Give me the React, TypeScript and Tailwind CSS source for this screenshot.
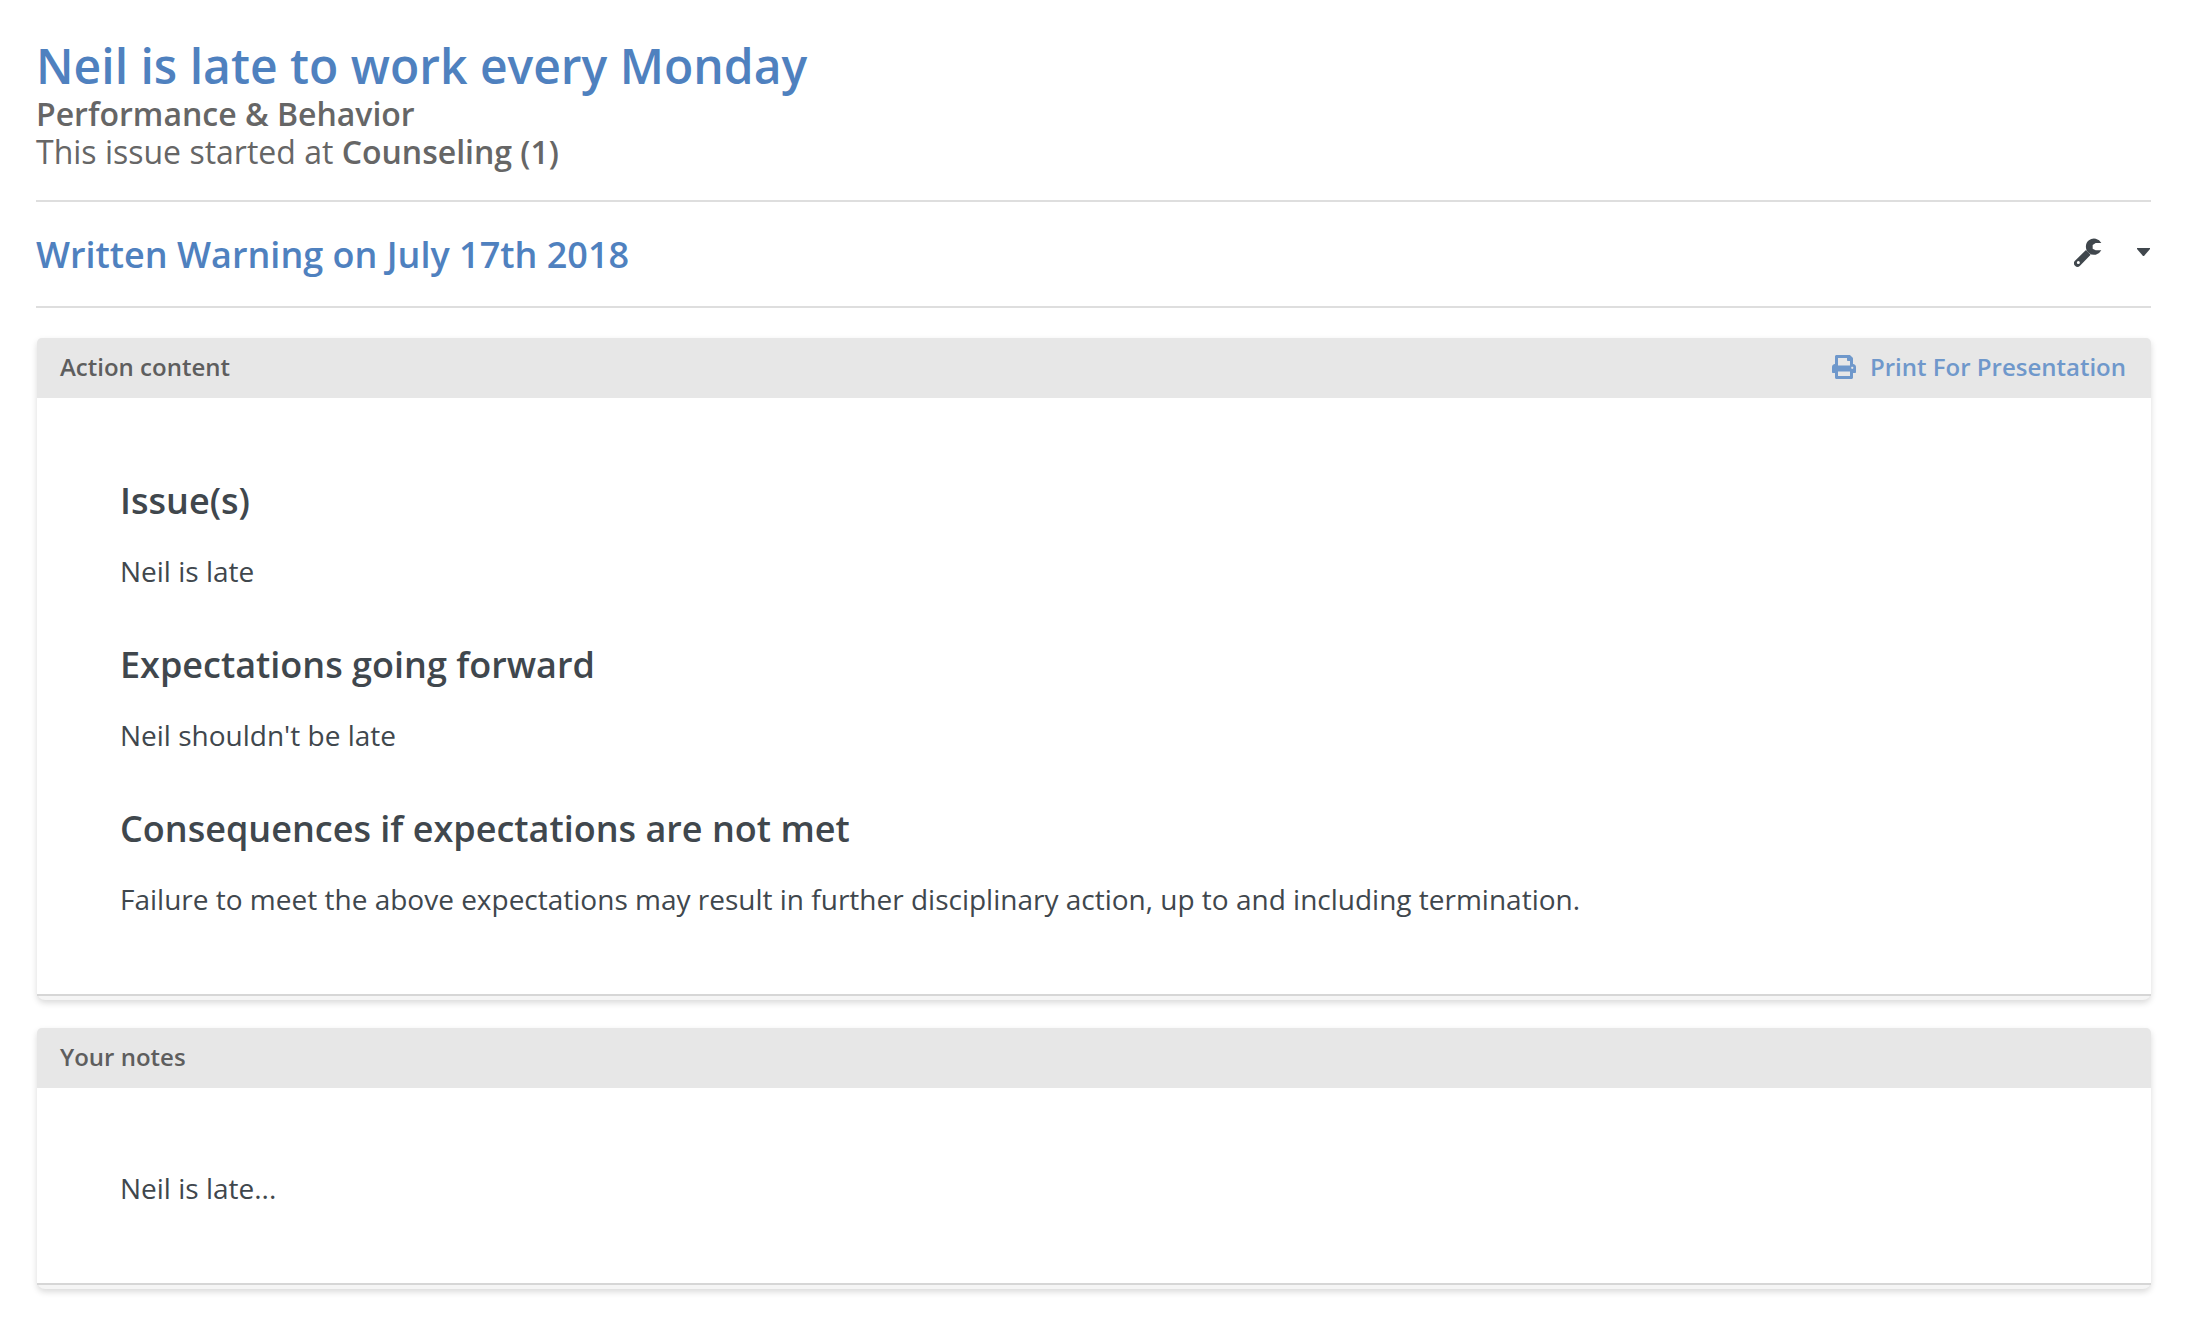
import type { ReactNode } from "react";
import { FaPrint } from "react-icons/fa";

function WrenchIcon() {
  return (
    <svg className="h-[29px] w-7" viewBox="0 0 84 87" fill="currentColor" aria-hidden="true">
      <path d="M82 15A24.5 24.5 0 1 0 82 37H65L56 32V21L65 15Z" />
      <path
        fillRule="evenodd"
        d="M36 36L50 50L18 83A10.500 10.500 0 0 1 3 68ZM13 69a4.500 4.500 0 1 0 0 9a4.500 4.500 0 1 0 0-9Z"
      />
    </svg>
  );
}

function CaretIcon() {
  return (
    <svg className="h-2 w-[13px]" viewBox="0 0 13 8" fill="currentColor" aria-hidden="true">
      <path d="M0 0H13V1L7 8H6L0 1Z" />
    </svg>
  );
}

function Panel({ title, action, children }: { title: string; action?: ReactNode; children: ReactNode }) {
  return (
    <section className="rounded-t-[5px] rounded-b-lg bg-[#f5f5f5] pb-1 shadow-[0_3px_6px_rgba(0,0,0,0.15)]">
      <header className="flex h-[60px] items-center justify-between rounded-t-[5px] bg-[#e7e7e7] pr-[25px] pb-0.5 pl-[23px] text-2xl font-semibold">
        <h3 className="text-[#5e5e5e]">{title}</h3>
        {action}
      </header>
      <div className="border-b-2 border-[#d6d6d6] bg-white px-[83px] pt-20 pb-[75px] text-[28px] leading-10 text-[#40474d]">
        {children}
      </div>
    </section>
  );
}

const sections = [
  { heading: "Issue(s)", text: "Neil is late" },
  { heading: "Expectations going forward", text: "Neil shouldn't be late" },
  {
    heading: "Consequences if expectations are not met",
    text: "Failure to meet the above expectations may result in further disciplinary action, up to and including termination.",
  },
];

export default function App() {
  return (
    <main className="min-h-screen bg-white pt-[37px] pr-[39px] pb-10 pl-9 font-['Open_Sans',sans-serif]">
      <header className="border-b-2 border-[#dedede] pb-[29px] text-[32px] leading-[38px] text-[#666666]">
        <h1 className="text-5xl leading-[58px] font-semibold text-[#4f81bf]">Neil is late to work every Monday</h1>
        <p className="font-semibold">Performance &amp; Behavior</p>
        <p>
          This issue started at <strong className="font-semibold">Counseling (1)</strong>
        </p>
      </header>

      <div className="flex h-[106px] items-center justify-between border-b-2 border-[#dedede]">
        <h2 className="pt-0.5 text-4xl leading-[48px] font-semibold text-[#4f81bf]">Written Warning on July 17th 2018</h2>
        <button type="button" aria-label="Action tools" className="mr-px mb-1 flex items-center gap-[35px] text-[#40474d]">
          <WrenchIcon />
          <CaretIcon />
        </button>
      </div>

      <div className="flex flex-col gap-7 pt-[30px] pl-px">
        <Panel
          title="Action content"
          action={
            <a href="#print" className="flex items-center gap-3.5 text-[#6f98cb]">
              <FaPrint className="size-6" aria-hidden="true" />
              Print For Presentation
            </a>
          }
        >
          <div className="flex flex-col gap-[51px]">
            {sections.map((section) => (
              <div key={section.heading} className="flex flex-col gap-[27px]">
                <h4 className="text-4xl leading-[46px] font-semibold">{section.heading}</h4>
                <p>{section.text}</p>
              </div>
            ))}
          </div>
        </Panel>
        <Panel title="Your notes">
          <p>Neil is late...</p>
        </Panel>
      </div>
    </main>
  );
}
